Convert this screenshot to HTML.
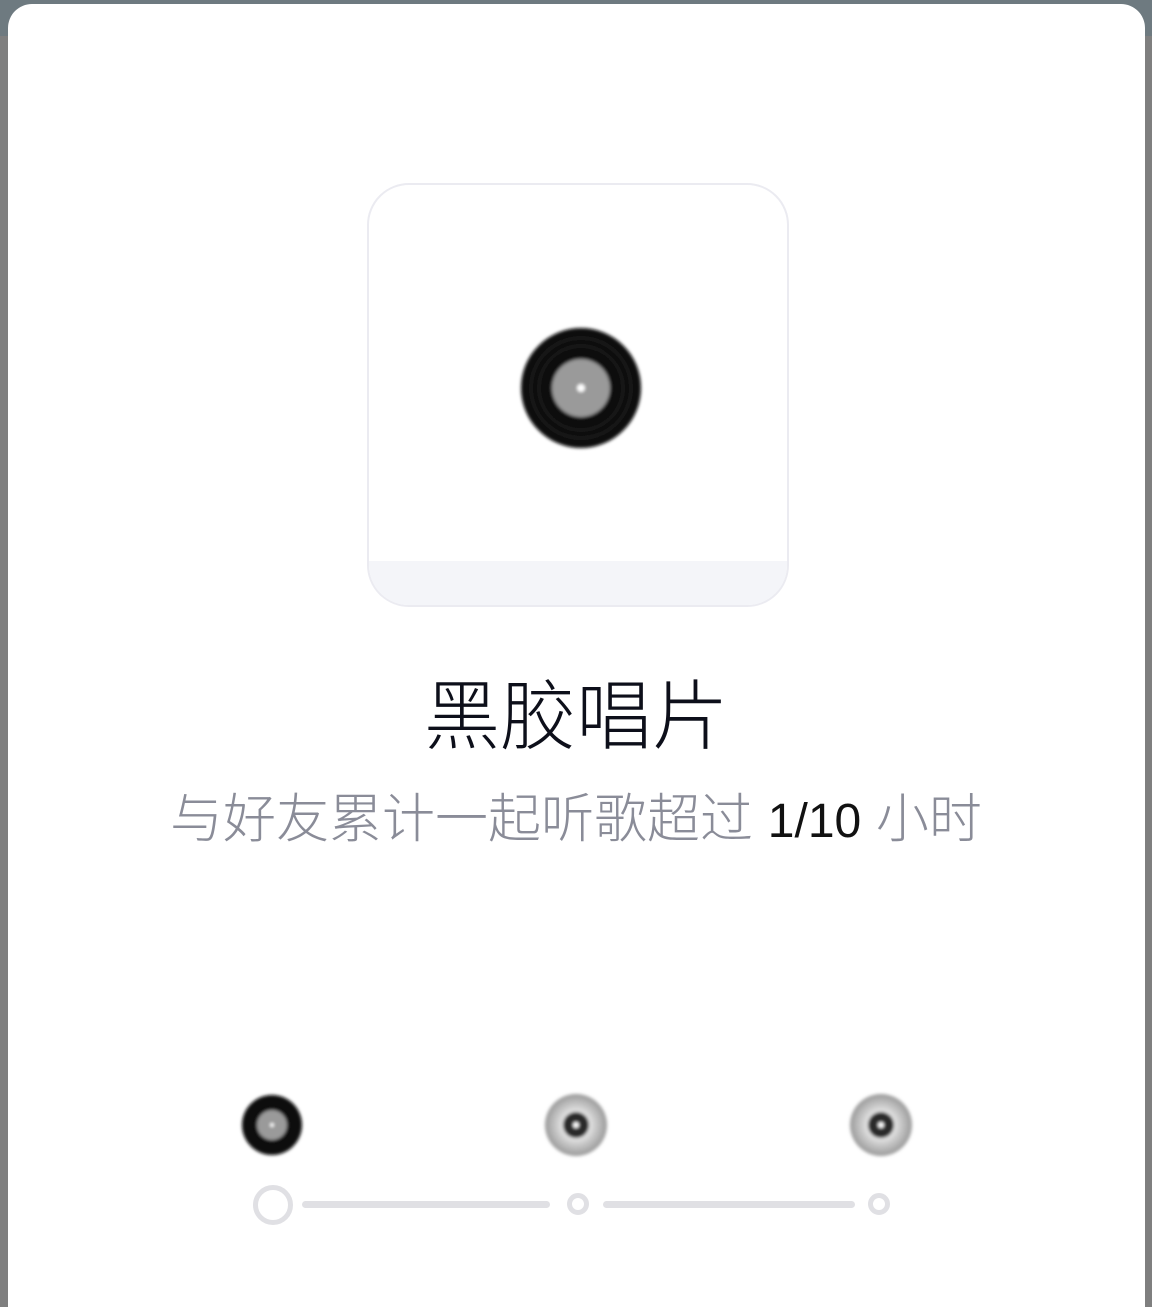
<!DOCTYPE html>
<html><head><meta charset="utf-8"><style>
html,body{margin:0;padding:0;width:1152px;height:1307px;overflow:hidden;background:#7f7f7f;font-family:"Liberation Sans","Noto Sans CJK SC",sans-serif;}
.top{position:absolute;left:0;top:0;width:1152px;height:36px;background:#6e7a80;}
.modal{position:absolute;left:8px;top:4px;width:1137px;height:1303px;background:#fff;border-radius:24px 24px 0 0;}
.card{position:absolute;left:367px;top:183px;width:418px;height:420px;border:2px solid #ebebf1;border-radius:42px;background:#fff;overflow:hidden;box-sizing:content-box;}
.band{position:absolute;left:0;bottom:0;width:100%;height:44px;background:#f4f5f9;}
.title{position:absolute;left:0;width:1152px;top:668px;text-align:center;font-size:76px;line-height:100px;color:#0d0f1a;font-weight:300;}
.sub{position:absolute;left:0;width:1152px;top:788px;text-align:center;font-size:53px;line-height:64px;color:#8a8c98;font-weight:300;white-space:nowrap;}
.sub b{font-weight:normal;color:#111;font-size:48px;}
.line{position:absolute;height:7px;background:#e0e0e4;border-radius:4px;top:1201px;}
.dot{position:absolute;border-radius:50%;border:5px solid #e0e0e4;box-sizing:border-box;background:#fff;}
</style></head><body>
<div class="top"></div>
<div class="modal"></div>
<div class="card"><div class="band"></div></div>
<svg style="position:absolute;left:0;top:0" width="1152" height="1307">
<defs>
<filter id="bl"><feGaussianBlur stdDeviation="1.5"/></filter>
<radialGradient id="sil"><stop offset="0.4" stop-color="#e8e8e8"/><stop offset="1" stop-color="#9a9a9a"/></radialGradient>
</defs>
<g filter="url(#bl)">
<circle cx="581" cy="388" r="60" fill="#0a0a0a"/>
<circle cx="581" cy="388" r="50" fill="none" stroke="#2a2a2a" stroke-width="1"/>
<circle cx="581" cy="388" r="42" fill="none" stroke="#2a2a2a" stroke-width="1"/>
<circle cx="581" cy="388" r="29" fill="#9a9a9a"/>
<circle cx="581" cy="388" r="4" fill="#fff"/>
<circle cx="272" cy="1125" r="30" fill="#0a0a0a"/>
<circle cx="272" cy="1125" r="15" fill="#9a9a9a"/>
<circle cx="272" cy="1125" r="2" fill="#fff"/>
<circle cx="576" cy="1125" r="31" fill="url(#sil)"/>
<circle cx="576" cy="1125" r="13" fill="#2a2a2a"/>
<circle cx="576" cy="1125" r="3" fill="#fff"/>
<circle cx="881" cy="1125" r="31" fill="url(#sil)"/>
<circle cx="881" cy="1125" r="13" fill="#2a2a2a"/>
<circle cx="881" cy="1125" r="3" fill="#fff"/>
</g>
</svg>
<div class="title">黑胶唱片</div>
<div class="sub">与好友累计一起听歌超过 <b>1/10</b> 小时</div>
<div class="dot" style="left:253px;top:1185px;width:40px;height:40px"></div>
<div class="line" style="left:302px;width:248px"></div>
<div class="dot" style="left:567px;top:1193px;width:22px;height:22px"></div>
<div class="line" style="left:603px;width:252px"></div>
<div class="dot" style="left:868px;top:1193px;width:22px;height:22px"></div>
</body></html>
